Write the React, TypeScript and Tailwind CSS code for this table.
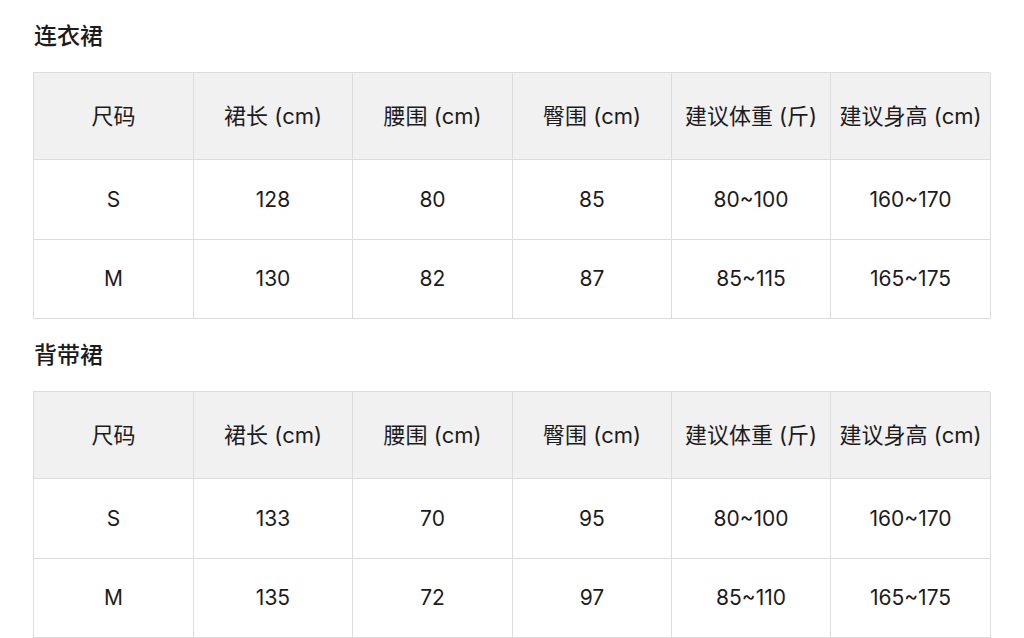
import React from "react";

const headers = ["尺码", "裙长 (cm)", "腰围 (cm)", "臀围 (cm)", "建议体重 (斤)", "建议身高 (cm)"];

const tables = [
  {
    title: "连衣裙",
    rows: [
      ["S", "128", "80", "85", "80~100", "160~170"],
      ["M", "130", "82", "87", "85~115", "165~175"],
    ],
  },
  {
    title: "背带裙",
    rows: [
      ["S", "133", "70", "95", "80~100", "160~170"],
      ["M", "135", "72", "97", "85~110", "165~175"],
    ],
  },
];

export default function App() {
  return (
    <div
      className="w-[1024px] h-[638px] overflow-hidden bg-white pl-[33px] text-[#1c1c1c]"
      style={{ fontFamily: 'Inter, "Noto Sans CJK SC", sans-serif' }}
    >
      {tables.map((t) => (
        <div key={t.title}>
          <div className="h-[72px] flex items-center pl-[1px] pt-[1px] text-[23px] font-medium">{t.title}</div>
          <div className="w-[957px] grid grid-cols-[160px_159px_160px_159px_159px_160px] border-l border-t border-[#dddddd]">
            {headers.map((h) => (
              <div
                key={h}
                className="h-[87px] flex items-center justify-center bg-[#f1f1f1] border-r border-b border-[#dddddd] whitespace-nowrap text-[22px]"
              >
                {h}
              </div>
            ))}
            {t.rows.map((r, ri) =>
              r.map((c, ci) => (
                <div
                  key={ri + "-" + ci}
                  className={
                    (ri === 0 ? "h-[80px] " : "h-[79px] ") +
                    "flex items-center justify-center border-r border-b border-[#dddddd] text-[21px]"
                  }
                >
                  {c}
                </div>
              ))
            )}
          </div>
        </div>
      ))}
    </div>
  );
}
